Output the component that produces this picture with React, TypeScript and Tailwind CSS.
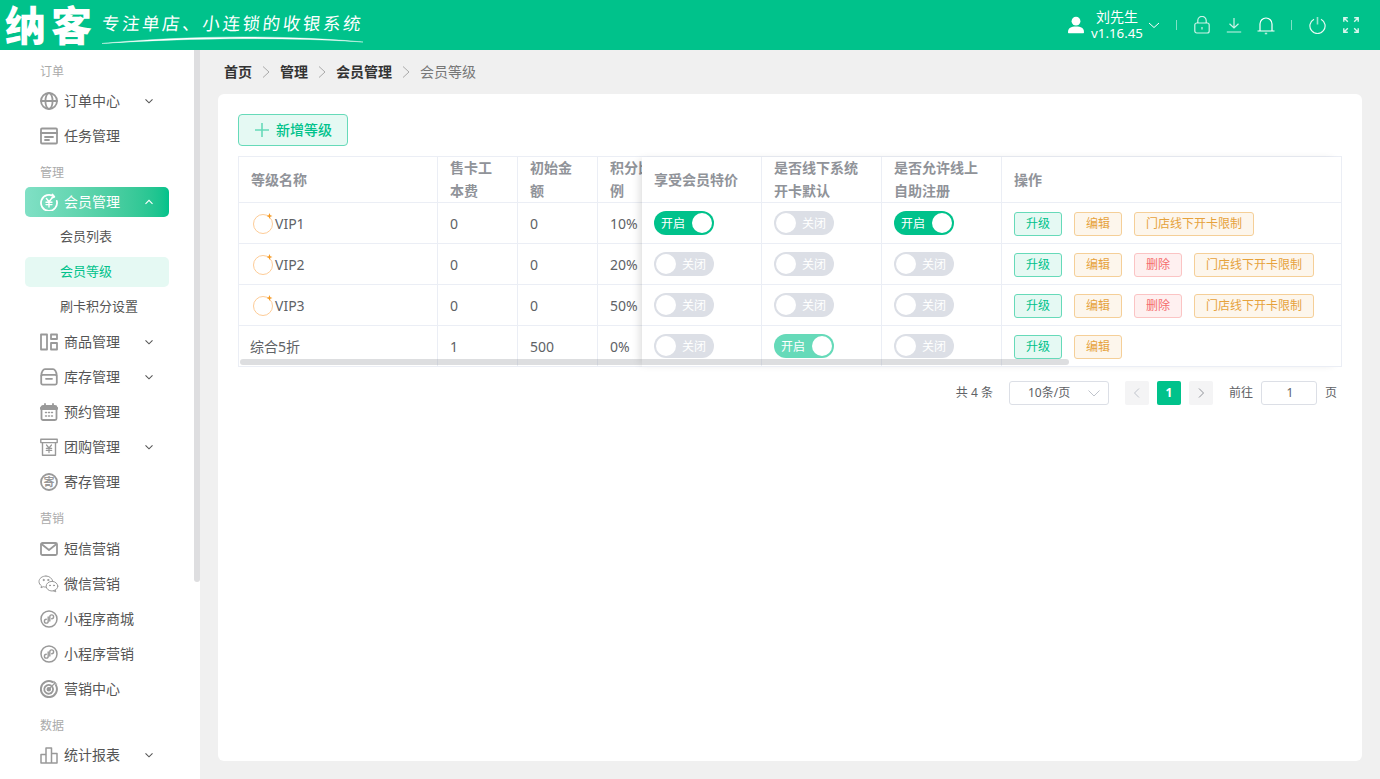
import React from "react";

const FONT = '"Noto Sans","Noto Sans CJK SC",sans-serif';

const base = {
  fill: "none",
  stroke: "currentColor",
  strokeWidth: 1.8,
  strokeLinecap: "round" as const,
  strokeLinejoin: "round" as const,
};
const I = ({ children, className }: { children: React.ReactNode; className?: string }) => (
  <svg viewBox="0 0 18 18" width="18" height="18" className={className} {...base}>
    {children}
  </svg>
);

const Globe = () => (
  <I>
    <circle cx="9" cy="9" r="8" />
    <ellipse cx="9" cy="9" rx="3.6" ry="8" />
    <path d="M1 9h16" />
  </I>
);
const Task = () => (
  <I>
    <rect x="1" y="1.5" width="16" height="15" rx="1" />
    <path d="M1 6h16" strokeWidth="2.2" />
    <path d="M5 10h8M5 13h4" />
  </I>
);
const MemberActive = () => (
  <I>
    <path d="M14 3.6A8 8 0 1 0 16.8 8" />
    <path d="M12.5 1.5l1.8 2.2-2.4 1.3" />
    <path d="M6.4 5.5L9 8.8l2.6-3.3M6 9.2h6M6 11.6h6M9 8.8V14" strokeWidth="1.4" />
  </I>
);
const Goods = () => (
  <I>
    <rect x="1" y="1.5" width="6" height="15" />
    <rect x="11" y="1.5" width="6" height="4.5" />
    <rect x="11" y="10" width="6" height="6.5" />
  </I>
);
const Box = () => (
  <I>
    <path d="M1.4 7.4C1.4 3.5 3.5 1.2 5 1.2h8c1.5 0 3.6 2.3 3.6 6.2" />
    <rect x="1.2" y="6.8" width="15.6" height="9.8" rx="1.5" />
    <path d="M6 10.8h6" />
  </I>
);
const Calendar = () => (
  <I>
    <rect x="1.5" y="3" width="15" height="14" rx="1.5" />
    <path d="M1.5 5.4h15" strokeWidth="3.4" />
    <path d="M5 1v3M13 1v3" />
    <path d="M5.5 9.5h1M8.5 9.5h1M11.5 9.5h1M5.5 13h1M8.5 13h1M11.5 13h1" strokeWidth="1.4" />
  </I>
);
const Group = () => (
  <I>
    <path d="M0.8 1.2h16.4v3.4H0.8z" strokeWidth="1.4" />
    <path d="M2.5 4.6v12.6h13V4.6" strokeWidth="1.4" />
    <path d="M6.5 7l2.5 3 2.5-3M6.3 10.3h5.4M6.3 12.4h5.4M9 10v4.6" strokeWidth="1.2" />
  </I>
);
const Deposit = () => (
  <I>
    <circle cx="9" cy="9" r="8" />
    <text x="9" y="12.8" textAnchor="middle" fontSize="11" fill="currentColor" stroke="none" fontWeight="700" fontFamily={FONT}>
      寄
    </text>
  </I>
);
const Mail = () => (
  <I>
    <rect x="1" y="3" width="16" height="12" rx="1.5" />
    <path d="M1.5 4l7.5 6 7.5-6" />
  </I>
);
const Wechat = () => (
  <svg viewBox="0 0 21 18" width="21" height="18" fill="none" stroke="currentColor" strokeWidth="1" strokeLinecap="round" strokeLinejoin="round" className="-ml-[2px]">
    <path d="M8 1C4 1 1 3.5 1 6.6c0 1.8 1 3.2 2.5 4.3L3 12.8l2.2-1.1c.8.2 1.6.4 2.4.4" />
    <path d="M14.8 6.2C14 3.2 11.4 1 8 1" />
    <ellipse cx="14" cy="11.2" rx="5.8" ry="4.8" />
    <path d="M17.2 15l.6 1.8-2.4-1" />
    <circle cx="5.6" cy="5" r=".6" fill="currentColor" />
    <circle cx="10.2" cy="5" r=".6" fill="currentColor" />
    <circle cx="12" cy="10.4" r=".5" fill="currentColor" />
    <circle cx="16" cy="10.4" r=".5" fill="currentColor" />
  </svg>
);
const Mini = () => (
  <I>
    <circle cx="9" cy="9" r="8" strokeWidth="1.5" />
    <path d="M8.2 7v4.2a1.9 1.9 0 1 1-1.9-1.9M9.8 11V6.8a1.9 1.9 0 1 1 1.9 1.9" strokeWidth="1.4" />
  </I>
);
const Target = () => (
  <I>
    <path d="M12.6 2A8 8 0 1 0 16 5.4" strokeWidth="2" />
    <path d="M11 5.6A4.4 4.4 0 1 0 12.4 7" strokeWidth="1.8" />
    <circle cx="8.8" cy="9.2" r="1.4" fill="currentColor" />
    <path d="M9 9l6.4-6.4M14 1.4l.3 2.3 2.4.3" strokeWidth="1.2" />
  </I>
);
const Bars = () => (
  <I>
    <path d="M1 17V8.5h5V17M6 17V2h5.5v15M11.5 17V7.5H17V17H1" strokeWidth="1.5" />
  </I>
);
const Chevron = ({ up, className }: { up?: boolean; className?: string }) => (
  <svg viewBox="0 0 12 12" width="12" height="12" fill="none" stroke="currentColor" strokeWidth="1.1" className={className}>
    <path d={up ? "M2.5 7.8L6 4.3l3.5 3.5" : "M2.5 4.3L6 7.8l3.5-3.5"} />
  </svg>
);

type Entry =
  | { kind: "label"; text: string; tall?: boolean }
  | { kind: "item"; text: string; icon: React.ReactNode; arrow?: boolean; active?: boolean }
  | { kind: "sub"; text: string; active?: boolean };

const MENU: Entry[] = [
  { kind: "label", text: "订单" },
  { kind: "item", text: "订单中心", icon: <Globe />, arrow: true },
  { kind: "item", text: "任务管理", icon: <Task /> },
  { kind: "label", text: "管理" },
  { kind: "item", text: "会员管理", icon: <MemberActive />, arrow: true, active: true },
  { kind: "sub", text: "会员列表" },
  { kind: "sub", text: "会员等级", active: true },
  { kind: "sub", text: "刷卡积分设置" },
  { kind: "item", text: "商品管理", icon: <Goods />, arrow: true },
  { kind: "item", text: "库存管理", icon: <Box />, arrow: true },
  { kind: "item", text: "预约管理", icon: <Calendar /> },
  { kind: "item", text: "团购管理", icon: <Group />, arrow: true },
  { kind: "item", text: "寄存管理", icon: <Deposit /> },
  { kind: "label", text: "营销", tall: true },
  { kind: "item", text: "短信营销", icon: <Mail /> },
  { kind: "item", text: "微信营销", icon: <Wechat /> },
  { kind: "item", text: "小程序商城", icon: <Mini /> },
  { kind: "item", text: "小程序营销", icon: <Mini /> },
  { kind: "item", text: "营销中心", icon: <Target /> },
  { kind: "label", text: "数据" },
  { kind: "item", text: "统计报表", icon: <Bars />, arrow: true },
];

function Sidebar() {
  return (
    <aside className="relative w-[200px] shrink-0 bg-white overflow-hidden">
      <div className="pt-[5px] pl-[25px] w-[169px] box-content">
        {MENU.map((m) => {
          if (m.kind === "label")
            return (
              <div
                key={m.text}
                className={"pt-[7px] pl-[15px] text-[12px] leading-[20px] text-[#aaaaaa] " + (m.tall ? "h-[32px]" : "h-[31px]")}
              >
                {m.text}
              </div>
            );
          if (m.kind === "sub")
            return (
              <div
                key={m.text}
                className={
                  "h-[30px] mb-[5px] w-[144px] rounded-[5px] pl-[35px] text-[13px] leading-[29px] " +
                  (m.active ? "bg-[#e5f9f3] text-[#00c28b]" : "text-[#555555]")
                }
              >
                {m.text}
              </div>
            );
          return (
            <div
              key={m.text}
              className={
                "flex items-center h-[30px] mb-[5px] w-[144px] rounded-[5px] pl-[15px] pr-[14px] text-[14px] " +
                (m.active
                  ? "bg-gradient-to-r from-[#80e0c5] to-[#00c28b] text-white"
                  : "text-[#555555]")
              }
            >
              <span className={"w-[24px] shrink-0 flex items-center " + (m.active ? "text-white" : "text-[#999999]")}>
                {m.icon}
              </span>
              <span className="flex-1 pb-[2px]">{m.text}</span>
              {m.arrow && <Chevron up={m.active} />}
            </div>
          );
        })}
      </div>
      <div className="absolute right-0 top-0 w-[6px] h-[532px] bg-[#dedee0] rounded-b-[3px]" />
    </aside>
  );
}

function Header() {
  return (
    <header className="h-[50px] shrink-0 bg-[#00c28b] text-white flex items-center relative">
      <div className="flex items-center pl-[5px] w-[370px] relative h-full">
        <span className="text-[41px] leading-none font-black tracking-[5px] whitespace-nowrap">纳客</span>
        <span className="ml-[5px] -mt-[4px] text-[17.5px] tracking-[2.6px] whitespace-nowrap -skew-x-6">专注单店、小连锁的收银系统</span>
        <svg className="absolute left-[100px] top-[34px]" width="266" height="12" viewBox="0 0 266 12" fill="none">
          <path d="M2 9.5C70 3 170 -0.5 263 8C170 2 70 5 2 9.5Z" fill="white" stroke="white" strokeWidth=".4" />
        </svg>
      </div>
      <div className="ml-auto flex items-center">
        <svg width="18" height="18" viewBox="0 0 18 18" fill="white" className="mr-[6px]">
          <circle cx="9" cy="5.2" r="4.4" />
          <path d="M1 16.2c0-4 3-5.6 8-5.6s8 1.6 8 5.6c0 .6-.4 1-1 1H2c-.6 0-1-.4-1-1z" />
        </svg>
        <div className="flex flex-col items-center w-[52px] text-[14px] leading-[17px] pb-[1px]">
          <span>刘先生</span>
          <span className="whitespace-nowrap text-[13.3px]">v1.16.45</span>
        </div>
        <svg width="12" height="12" viewBox="0 0 12 12" fill="none" stroke="white" strokeWidth="1" className="ml-[5px]">
          <path d="M1 4l5 4.5L11 4" />
        </svg>
        <span className="ml-[16px] w-px h-[10px] bg-white/50" />
        <svg width="16" height="18" viewBox="0 0 16 18" fill="none" stroke="white" strokeOpacity=".8" strokeWidth="1.2" className="ml-[17px]">
          <rect x=".8" y="7" width="14.4" height="10" rx="2" />
          <path d="M3.8 7V4.6a4.2 4.2 0 0 1 8.4 0V7M8 11v2.4" />
        </svg>
        <svg width="16" height="16" viewBox="0 0 16 16" fill="none" stroke="white" strokeOpacity=".8" strokeWidth="1.2" className="ml-[16px]">
          <path d="M8 1v10M3.5 6.8L8 11l4.5-4.2M.8 15h14.4" />
        </svg>
        <svg width="18" height="19" viewBox="0 0 18 19" fill="none" stroke="white" strokeWidth="1.2" className="ml-[15px]">
          <path d="M3 15V8a6 6 0 0 1 12 0v7M.5 15h17" />
          <path d="M7.8 17.5h2.4" strokeWidth="1.6" strokeOpacity=".7" />
        </svg>
        <span className="ml-[16px] w-px h-[10px] bg-white/50" />
        <svg width="17" height="18" viewBox="0 0 17 18" fill="none" stroke="white" strokeOpacity=".9" strokeWidth="1.2" className="ml-[17px]">
          <path d="M5 3.2a7.6 7.6 0 1 0 7 0" />
          <path d="M8.5 1v7.5" strokeOpacity=".6" strokeWidth="1.6" />
        </svg>
        <svg width="16" height="16" viewBox="0 0 16 16" fill="none" stroke="white" strokeOpacity=".85" strokeWidth="1.4" className="ml-[17px] mr-[21px]">
          <path d="M.8 4.8V.8h4M.8.8l4 4M15.2 4.8V.8h-4M15.2.8l-4 4M.8 11.2v4h4M.8 15.2l4-4M15.2 11.2v4h-4M15.2 15.2l-4-4" />
        </svg>
      </div>
    </header>
  );
}

const ROWS = [
  { name: "VIP1", vip: true, cost: "0", amount: "0", ratio: "10%", a: true, b: false, c: true, del: false, limit: true, bMuted: false },
  { name: "VIP2", vip: true, cost: "0", amount: "0", ratio: "20%", a: false, b: false, c: false, del: true, limit: true, bMuted: false },
  { name: "VIP3", vip: true, cost: "0", amount: "0", ratio: "50%", a: false, b: false, c: false, del: true, limit: true, bMuted: false },
  { name: "综合5折", vip: false, cost: "1", amount: "500", ratio: "0%", a: false, b: true, c: false, del: false, limit: false, bMuted: true },
];

function Switch({ on, muted }: { on: boolean; muted?: boolean }) {
  return (
    <div
      className={
        "w-[60px] h-[24px] rounded-full flex items-center justify-between px-[2px] text-[12px] text-white " +
        (on ? (muted ? "bg-[#66dab9]" : "bg-[#00c28b]") : "bg-[#dcdfe6]")
      }
    >
      {on ? (
        <>
          <span className="pl-[5px] pt-[1px]">开启</span>
          <span className="w-[20px] h-[20px] rounded-full bg-white" />
        </>
      ) : (
        <>
          <span className="w-[20px] h-[20px] rounded-full bg-white" />
          <span className="pr-[6px] pt-[1px]">关闭</span>
        </>
      )}
    </div>
  );
}

function Tag({ tone, children, wide }: { tone: "g" | "o" | "r"; children: React.ReactNode; wide?: boolean }) {
  const t =
    tone === "g"
      ? "bg-[#e5f9f3] border-[#66dab9] text-[#00c28b]"
      : tone === "o"
        ? "bg-[#fdf6ec] border-[#f5cf98] text-[#e6a23c]"
        : "bg-[#fef0f0] border-[#fbc4c4] text-[#f56c6c]";
  return (
    <span className={"h-[24px] mt-[2px] flex items-center justify-center rounded-[3px] border text-[12px] " + (wide ? "w-[120px] " : "w-[48px] ") + t}>
      {children}
    </span>
  );
}

function VipMark() {
  return (
    <svg width="22" height="22" viewBox="0 0 22 22" fill="none" className="shrink-0">
      <circle cx="11" cy="12" r="9.5" stroke="#fdc58a" strokeWidth=".9" />
      <path d="M17.5 1l.8 2.2 2.2.8-2.2.8-.8 2.2-.8-2.2-2.2-.8 2.2-.8z" fill="#f59a23" />
    </svg>
  );
}

const cellH = "h-[40px] flex items-center px-[12px] text-[14px] text-[#606266] border-r border-[#ebeef5]";
const headH = "h-[45px] flex items-center px-[12px] pb-[1px] text-[14px] leading-[23px] font-bold text-[#909399] border-r border-[#ebeef5]";

function Table() {
  return (
    <div className="relative mt-[10px] w-[1104px] border-t border-x border-[#ebeef5] flex">
      <div className="w-[403px] shrink-0 overflow-hidden">
        <div className="w-[460px]">
          <div className="flex border-b border-[#ebeef5]">
            <div className={headH + " w-[199px]"}>等级名称</div>
            <div className={headH + " w-[80px]"}>售卡工本费</div>
            <div className={headH + " w-[80px]"}>初始金额</div>
            <div className={headH + " w-[80px]"}>积分比例</div>
          </div>
          {ROWS.map((r) => (
            <div key={r.name} className="flex border-b border-[#ebeef5]">
              <div className={cellH + " w-[199px] " + (r.vip ? "!pl-[13px]" : "!pl-[11px]")}>
                {r.vip && <VipMark />}
                <span className={r.vip ? "pl-[1px]" : ""}>{r.name}</span>
              </div>
              <div className={cellH + " w-[80px]"}>{r.cost}</div>
              <div className={cellH + " w-[80px]"}>{r.amount}</div>
              <div className={cellH + " w-[80px]"}>{r.ratio}</div>
            </div>
          ))}
        </div>
      </div>
      <div className="flex-1 bg-white relative shadow-[-5px_0_8px_-3px_rgba(0,0,0,0.14)]">
        <div className="flex border-b border-[#ebeef5]">
          <div className={headH + " w-[120px]"}>享受会员特价</div>
          <div className={headH + " w-[120px]"}>是否线下系统开卡默认</div>
          <div className={headH + " w-[120px]"}>是否允许线上自助注册</div>
          <div className={headH + " flex-1 border-r-0"}>操作</div>
        </div>
        {ROWS.map((r) => (
          <div key={r.name} className="flex border-b border-[#ebeef5]">
            <div className={cellH + " w-[120px]"}>
              <Switch on={r.a} />
            </div>
            <div className={cellH + " w-[120px]"}>
              <Switch on={r.b} muted={r.bMuted} />
            </div>
            <div className={cellH + " w-[120px]"}>
              <Switch on={r.c} />
            </div>
            <div className={cellH + " flex-1 border-r-0 gap-[12px]"}>
              <Tag tone="g">升级</Tag>
              <Tag tone="o">编辑</Tag>
              {r.del && <Tag tone="r">删除</Tag>}
              {r.limit && (
                <Tag tone="o" wide>
                  门店线下开卡限制
                </Tag>
              )}
            </div>
          </div>
        ))}
      </div>
      <div className="absolute left-[1px] top-[202px] w-[829px] h-[6px] rounded-full bg-[#909399]/30" />
    </div>
  );
}

function Pagination() {
  return (
    <div className="mt-[14px] w-[1104px] h-[24px] flex items-center justify-end pr-[5px] text-[12px] text-[#606266]">
      <span className="whitespace-nowrap">共 4 条</span>
      <div className="relative ml-[16px] w-[100px] h-[24px] border border-[#dcdfe6] rounded-[3px] flex items-center pl-[18px]">
        10条/页
        <svg width="14" height="14" viewBox="0 0 14 14" fill="none" stroke="#c0c4cc" strokeWidth="1" className="absolute right-[7px] top-[4px]">
          <path d="M1.5 4.5L7 10l5.5-5.5" />
        </svg>
      </div>
      <span className="ml-[16px] w-[24px] h-[24px] rounded-[2px] bg-[#f4f4f5] flex items-center justify-center text-[#c0c4cc]">
        <svg width="12" height="12" viewBox="0 0 12 12" fill="none" stroke="currentColor" strokeWidth="1"><path d="M8 1.5L3.5 6 8 10.5" /></svg>
      </span>
      <span className="ml-[8px] w-[24px] h-[24px] rounded-[2px] bg-[#00c28b] text-white font-bold flex items-center justify-center">1</span>
      <span className="ml-[8px] w-[24px] h-[24px] rounded-[2px] bg-[#f4f4f5] flex items-center justify-center text-[#909399]">
        <svg width="12" height="12" viewBox="0 0 12 12" fill="none" stroke="currentColor" strokeWidth="1"><path d="M4 1.5L8.5 6 4 10.5" /></svg>
      </span>
      <span className="ml-[16px]">前往</span>
      <div className="ml-[8px] w-[56px] h-[24px] border border-[#dcdfe6] rounded-[3px] flex items-center justify-center pl-[2px]">1</div>
      <span className="ml-[8px]">页</span>
    </div>
  );
}

const Sep = () => (
  <svg width="14" height="14" viewBox="0 0 14 14" fill="none" stroke="#aaaaaa" strokeWidth="1" className="mx-[7px] mt-[2px]">
    <path d="M4 1.5L10 7l-6 5.5" />
  </svg>
);

export default function App() {
  return (
    <div className="w-[1380px] h-[779px] overflow-hidden flex flex-col bg-[#f0f0f0]" style={{ fontFamily: FONT }}>
      <Header />
      <div className="flex flex-1 min-h-0">
        <Sidebar />
        <main className="flex-1 flex flex-col min-w-0">
          <nav className="h-[44px] shrink-0 pl-[24px] pb-[2px] flex items-center text-[14px] text-[#333333] font-bold">
            <span>首页</span>
            <Sep />
            <span>管理</span>
            <Sep />
            <span>会员管理</span>
            <Sep />
            <span className="font-normal text-[#777777]">会员等级</span>
          </nav>
          <section className="ml-[18px] w-[1144px] h-[667px] bg-white rounded-[6px] pt-[20px] px-[20px]">
            <button className="w-[110px] h-[32px] rounded-[4px] border border-[#66dab9] bg-[#e5f9f3] text-[#00c28b] text-[14px] font-medium flex items-center pl-[16px] pb-[2px]">
              <svg width="14" height="14" viewBox="0 0 14 14" fill="none" stroke="#66dab9" strokeWidth="1.6" className="mr-[7px] mt-[2px]">
                <path d="M7 0v14M0 7h14" />
              </svg>
              新增等级
            </button>
            <Table />
            <Pagination />
          </section>
        </main>
      </div>
    </div>
  );
}
